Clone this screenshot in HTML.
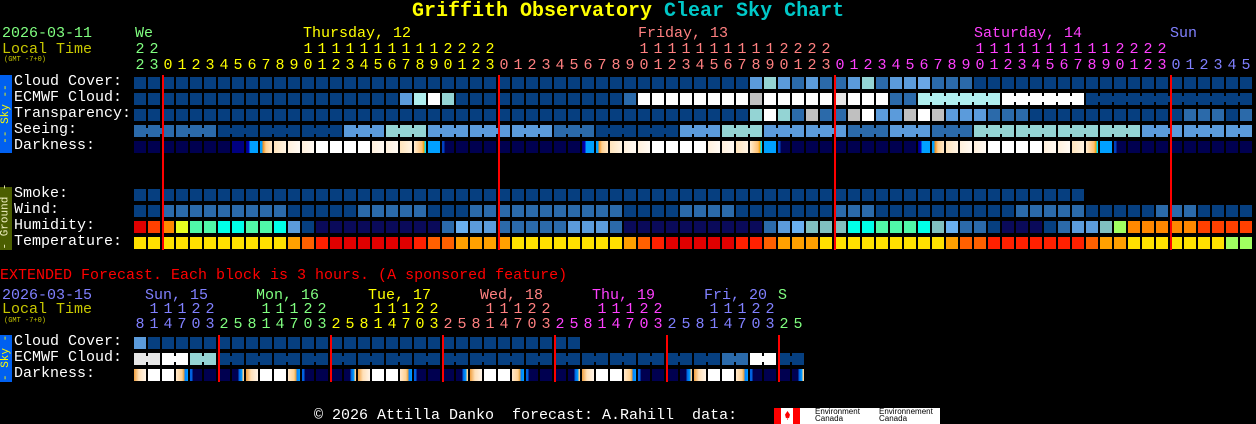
<!DOCTYPE html>
<html><head><meta charset="utf-8"><style>
html,body{margin:0;padding:0;background:#000;width:1256px;height:424px;overflow:hidden}
body{position:relative;font-family:"Liberation Mono",monospace;font-size:15px;color:#fff}
.t{position:absolute;white-space:pre;line-height:16px}
.b{position:absolute;width:12px;height:12px}
.r{position:absolute;width:2px;background:#f00}
.d{position:absolute;width:12px;text-align:center;line-height:16px}
</style></head><body>
<div class="t" style="left:412px;top:1px;font-size:20px;font-weight:bold;color:#ff0;line-height:22px">Griffith Observatory <span style="color:#00c8c8">Clear Sky Chart</span></div>
<div class="t" style="left:2px;top:26px;color:#80ff80">2026-03-11</div>
<div class="t" style="left:2px;top:42px;color:#c8c800">Local Time</div>
<div class="t" style="left:4px;top:56px;color:#c8c800;font-size:7px;line-height:8px">(GMT -7+0)</div>
<div class="t" style="left:135px;top:26px;color:#80ff80">We</div>
<div class="t" style="left:303px;top:26px;color:#ff0">Thursday, 12</div>
<div class="t" style="left:638px;top:26px;color:#ff8080">Friday, 13</div>
<div class="t" style="left:974px;top:26px;color:#ff40ff">Saturday, 14</div>
<div class="t" style="left:1170px;top:26px;color:#8080ff">Sun</div>

<div class="t" style="left:14px;top:74px">Cloud Cover:</div>
<div class="t" style="left:14px;top:90px">ECMWF Cloud:</div>
<div class="t" style="left:14px;top:106px">Transparency:</div>
<div class="t" style="left:14px;top:122px">Seeing:</div>
<div class="t" style="left:14px;top:138px">Darkness:</div>
<div class="t" style="left:14px;top:186px">Smoke:</div>
<div class="t" style="left:14px;top:202px">Wind:</div>
<div class="t" style="left:14px;top:218px">Humidity:</div>
<div class="t" style="left:14px;top:234px">Temperature:</div>

<div style="position:absolute;left:0;top:75px;width:12px;height:78px;background:#0060f0"></div>
<div class="t" style="left:-33px;top:108px;width:78px;text-align:center;transform:rotate(-90deg);color:#ff0;font-size:11px;line-height:12px">-- Sky --</div>
<div style="position:absolute;left:0;top:187px;width:12px;height:63px;background:#4b5e00"></div>
<div class="t" style="left:-26px;top:212px;width:63px;text-align:center;transform:rotate(-90deg);color:#f0f0c0;font-size:11px;line-height:12px">- Ground -</div>

<div class="t" style="left:0;top:268px;color:#f00">EXTENDED Forecast. Each block is 3 hours. (A sponsored feature)</div>
<div class="t" style="left:2px;top:288px;color:#8080ff">2026-03-15</div>
<div class="t" style="left:2px;top:302px;color:#c8c800">Local Time</div>
<div class="t" style="left:4px;top:317px;color:#c8c800;font-size:7px;line-height:8px">(GMT -7+0)</div>
<div class="t" style="left:145px;top:288px;color:#8080ff">Sun, 15</div>
<div class="t" style="left:256px;top:288px;color:#80ff80">Mon, 16</div>
<div class="t" style="left:368px;top:288px;color:#ff0">Tue, 17</div>
<div class="t" style="left:480px;top:288px;color:#ff8080">Wed, 18</div>
<div class="t" style="left:592px;top:288px;color:#ff40ff">Thu, 19</div>
<div class="t" style="left:704px;top:288px;color:#8080ff">Fri, 20</div>
<div class="t" style="left:778px;top:288px;color:#80ff80">S</div>
<div class="t" style="left:14px;top:334px">Cloud Cover:</div>
<div class="t" style="left:14px;top:350px">ECMWF Cloud:</div>
<div class="t" style="left:14px;top:366px">Darkness:</div>
<div style="position:absolute;left:0;top:335px;width:12px;height:47px;background:#0060f0"></div>
<div class="t" style="left:-17px;top:352px;width:46px;text-align:center;transform:rotate(-90deg);color:#ff0;font-size:11px;line-height:12px">- Sky -</div>

<div class="t" style="left:314px;top:408px">© 2026 Attilla Danko  forecast: A.Rahill  data:</div>
<div style="position:absolute;left:774px;top:408px;width:166px;height:16px;background:#fff"></div>
<div style="position:absolute;left:774px;top:408px;width:7px;height:16px;background:#f00"></div>
<div style="position:absolute;left:793px;top:408px;width:7px;height:16px;background:#f00"></div>
<div style="position:absolute;left:785px;top:411px;width:5px;height:9px;background:#f00;clip-path:polygon(50% 0,100% 40%,80% 80%,55% 75%,55% 100%,45% 100%,45% 75%,20% 80%,0 40%)"></div>
<div class="t" style="left:815px;top:408px;color:#000;font-family:'Liberation Sans',sans-serif;font-size:8px;line-height:7px">Environment<br>Canada</div>
<div class="t" style="left:879px;top:408px;color:#000;font-family:'Liberation Sans',sans-serif;font-size:8px;line-height:7px">Environnement<br>Canada</div>

<div id="g"></div>
<script>
var out='';
function blk(x,y,c,w){out+='<div class="b" style="left:'+x+'px;top:'+y+'px;background:'+c+(w?';width:'+w+'px':'')+'"></div>';}
function conn(x,y,c){out+='<div class="b" style="left:'+x+'px;top:'+(y+3)+'px;width:4px;height:6px;background:'+c+'"></div>';}
var D='#063f80',M='#2b6aaa',L='#5b9bdb',L2='#6aa6e6',C='#94d4d4',P='#b0eeee',W='#ffffff',G='#c0c0c0',g='#e6e6e6',N='#000050';
function fill(n,v){var a=[];for(var i=0;i<n;i++)a.push(v);return a;}
function set(a,from,to,v){for(var i=from;i<=to;i++)a[i]=v;}
function row(a,y,x0,groups){for(var k=0;k<a.length;k++){if(a[k])blk(x0+14*k,y,a[k]);}
 if(groups)groups.forEach(function(gp){for(var k=gp[0];k<gp[1];k++)conn(x0+14*k+10,y,a[k]);});}
var X=134;
// cloud
var cc=fill(80,D);[[44,L],[45,C],[46,L],[47,M],[48,L],[49,M],[50,M],[51,L],[52,C],[53,M],[54,L],[55,L],[56,L2],[57,M],[58,M],[59,M]].forEach(function(p){cc[p[0]]=p[1]});
row(cc,77,X);
var ec=fill(80,D);ec[19]=L;ec[20]=P;ec[21]=W;ec[22]=C;ec[35]=M;set(ec,36,43,W);ec[44]=G;set(ec,45,49,W);ec[50]=g;set(ec,51,53,W);ec[54]=M;ec[55]=M;set(ec,56,61,P);set(ec,62,67,W);
row(ec,93,X,[[56,61],[62,67],[68,79]]);
var tr=fill(80,D);[[44,C],[45,W],[46,C],[47,M],[48,G],[49,M],[50,M],[51,G],[52,W],[53,L],[54,L],[55,G],[56,W],[57,G],[58,L],[59,L],[60,L],[61,M],[62,M],[63,M],[75,M],[76,M],[77,M],[79,M]].forEach(function(p){tr[p[0]]=p[1]});
row(tr,109,X);
var sg=[M,M,D,D,D,L,C,L,L,L,M,D,D,L,C,L,L,M,L,M,C,C,C,C,L,L,L],se=[],gs=[];
for(var k=0;k<80;k++)se.push(sg[Math.floor(k/3)]);
for(var k=0;k<27;k++)gs.push([3*k,Math.min(3*k+2,79)]);
row(se,125,X,gs);
// darkness
function dk(x,y,t){var bg;
 if(t=='N')bg=N;else if(t=='N2')bg='#000080';
 else if(t=='B')bg='linear-gradient(90deg,#000080 0,#0000c0 3px,#00a0ff 4px)';
 else if(t=='O')bg='linear-gradient(90deg,#00a0ff 0,#00a0ff 2px,#f09020 3px,#ffd090 6px,#ffe8c8 12px)';
 else if(t=='C1')bg='linear-gradient(90deg,#ffe4bc,#fff4e4)';
 else if(t=='C2')bg='linear-gradient(90deg,#fff0dc,#fffaf4)';
 else if(t=='W')bg='#fff';
 else if(t=='S')bg='linear-gradient(90deg,#ffecd0,#ffc070 8px,#f0a000 10px,#00e0ff 11px)';
 else if(t=='A')bg='#00a0ff';
 else if(t=='E')bg='linear-gradient(90deg,#0040c0 0,#0040c0 2px,#000050 3px)';
 out+='<div class="b" style="left:'+x+'px;top:'+y+'px;background:'+bg+'"></div>';}
var da=fill(80,'N');da[7]='N2';
[0,24,48].forEach(function(d){da[8+d]='B';da[9+d]='O';var s=['C1','C2','C2','W','W','W','W','C2','C2','C1'];for(var i=0;i<10;i++)da[10+d+i]=s[i];da[20+d]='S';da[21+d]='A';da[22+d]='E';});
for(var k=0;k<80;k++)dk(X+14*k,141,da[k]);
// ground
row(fill(68,D),189,X);
var wi=fill(80,D);set(wi,2,10,M);set(wi,16,20,M);set(wi,24,34,M);set(wi,39,42,M);set(wi,50,52,M);set(wi,63,67,M);set(wi,73,75,M);
row(wi,205,X);
var NV='#0a0a5a',R='#e00000',R2='#ff4000',O='#ff8800',Yg='#e8ff20',SG='#50f8a8',CY='#00ffe8',LB='#6ab0f0',TC='#80c0c0',LG='#a0ff60';
var hu=[R,R2,O,Yg,SG,SG,CY,CY,SG,SG,CY,L,D,NV,NV,NV,NV,NV,NV,NV,NV,NV,M,LB,L,L,M,M,M,M,M,L,L,L,M];
set(hu,35,44,NV);hu=hu.slice(0,45);
hu=hu.concat([M,L,LB,TC,TC,TC,CY,CY,SG,SG,SG,CY,TC,LB,M,M,D,NV,NV,NV,D,M,L,L,TC,LG,O,O,O,O,O,R2,R2,R2,R2]);
row(hu,221,X);
var Y='#ffe000',TO='#ffa000',T6='#ff6000',T2='#ff2000';
var te=[Y,Y,Y,Y,Y,Y,Y,Y,Y,Y,Y,TO,T6,T2,R,R,R,R,R,R,T2,T6,T6,TO,TO,TO,TO,Y,Y,Y,Y,Y,Y,Y,Y,TO,T6,T2,R,R,R,R,R,T2,T2,T6,TO,TO,TO,Y,Y,Y,Y,Y,Y,Y,Y,Y,TO,T6,T6,T2,T2,T2,T2,T2,T2,T2,T6,TO,TO,Y,Y,Y,Y,Y,Y,Y,LG,LG];
row(te,237,X);
[162,498,834,1170].forEach(function(x){out+='<div class="r" style="left:'+x+'px;top:75px;height:175px"></div>';});
// hour labels
function col(k){return k<2?'#80ff80':k<26?'#ffff00':k<50?'#ff8080':k<74?'#ff40ff':'#8080ff';}
for(var k=0;k<80;k++){var h=(22+k)%24,c=col(k),x=X+14*k;
 if(h>=10)out+='<div class="d" style="left:'+x+'px;top:42px;color:'+c+'">'+Math.floor(h/10)+'</div>';
 out+='<div class="d" style="left:'+x+'px;top:58px;color:'+c+'">'+(h%10)+'</div>';}
// extended
var ecc=fill(32,D);ecc[0]=L;row(ecc,337,X);
var ee=fill(48,D);ee[0]=g;ee[1]=g;ee[2]=W;ee[3]=W;ee[4]=C;ee[5]=C;ee[42]=M;ee[43]=M;ee[44]=W;ee[45]=W;
var eg=[];for(var k=0;k<24;k++)eg.push([2*k,2*k+1]);
row(ee,353,X,eg);
for(var k=0;k<48;k++){var p=k%8,t,x=X+14*k,bg;
 if(p==0)bg='linear-gradient(90deg,#f0a040,#ffe0b8 5px,#fff4e8)';
 else if(p==1||p==2)bg='#fff';
 else if(p==3)bg='linear-gradient(90deg,#ffe8cc,#ffd090 6px,#e0a040 8px,#0080ff 9px,#00a0ff 12px)';
 else if(p==4)bg='linear-gradient(90deg,#0060e0 0,#0060e0 2px,#000050 3px)';
 else if(p==7)bg='linear-gradient(90deg,#000050 0,#000050 6px,#0060e0 7px,#00a0ff 10px,#ffd090 11px)';
 else bg=N;
 out+='<div class="b" style="left:'+x+'px;top:369px;background:'+bg+'"></div>';}
[218,330,442,554,666,778].forEach(function(x){out+='<div class="r" style="left:'+x+'px;top:335px;height:47px"></div>';});
var dc=['#8080ff','#80ff80','#ffff00','#ff8080','#ff40ff','#8080ff','#80ff80'],hh=[8,11,14,17,20,23,2,5];
for(var k=0;k<48;k++){var day=Math.floor((k+2)/8),c=dc[day],h=hh[k%8],x=X+14*k;
 if(h>=10)out+='<div class="d" style="left:'+x+'px;top:302px;color:'+c+'">'+Math.floor(h/10)+'</div>';
 out+='<div class="d" style="left:'+x+'px;top:317px;color:'+c+'">'+(h%10)+'</div>';}
document.getElementById('g').innerHTML=out;
</script>
</body></html>
